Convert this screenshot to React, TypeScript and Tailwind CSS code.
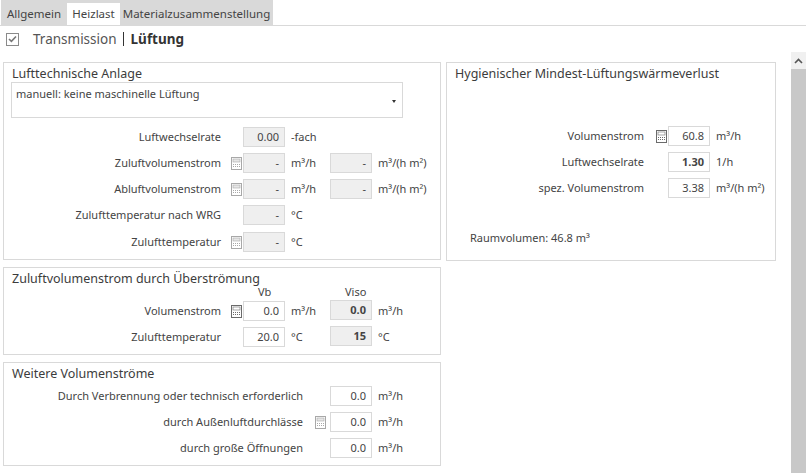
import React from 'react';

// calculator button next to the volume fields
function CalcIcon({ dark = false }: { dark?: boolean }) {
    const c = dark ? '#6b6b6b' : '#a8a8a8';
    return (
        <svg width="11" height="13" viewBox="0 0 11 13" className="block">
            <rect x="0.5" y="0.5" width="10" height="12" fill="#fff" stroke={c} />
            <rect x="2" y="2" width="7" height="3" fill={dark ? '#fff' : '#e6e6e6'} stroke={c} strokeWidth="0.6" />
            {[2, 4, 6, 8].map((x) =>
                [7, 9].map((y) => <rect key={`${x}-${y}`} x={x} y={y} width="1" height="1" fill={c} />)
            )}
        </svg>
    );
}

function Field({ value, disabled = false, bold = false, className = '' }: { value: string; disabled?: boolean; bold?: boolean; className?: string }) {
    return (
        <div
            className={`w-[42px] h-[20px] shrink-0 border border-[#d9d9d9] pr-[5px] text-right leading-[17px] ${disabled ? 'bg-[#efefef]' : 'bg-white'} ${bold ? 'font-bold' : ''} ${className}`}
        >
            {value}
        </div>
    );
}

function Panel({ title, className = '', children }: { title: string; className?: string; children?: React.ReactNode }) {
    return (
        <section className={`border border-[#d9d9d9] bg-white ${className}`}>
            <h3 className="ml-[8px] text-[12.5px] leading-[17px] text-[#3c3c3c]">{title}</h3>
            {children}
        </section>
    );
}

interface RowProps {
    label: string;
    calc?: 'light' | 'dark';
    value: string;
    unit: string;
    value2?: string;
    unit2?: string;
    disabled?: boolean;
    bold?: boolean;
}

// label column, calculator slot, field, unit, optional second field
function Row({ label, calc, value, unit, value2, unit2, disabled, bold }: RowProps) {
    return (
        <div className="flex h-[20px] items-center">
            <div className="w-[217px] shrink-0 text-right">{label}</div>
            <div className="flex w-[22px] shrink-0 justify-end pr-[1px]">{calc && <CalcIcon dark={calc === 'dark'} />}</div>
            <Field value={value} disabled={disabled} bold={bold} />
            <div className="ml-[6px] w-[39px] shrink-0">{unit}</div>
            {value2 && <Field value={value2} disabled={disabled} />}
            {unit2 && <div className="ml-[6px]">{unit2}</div>}
        </div>
    );
}

export default function App() {
    return (
        <div className="h-[473px] w-[806px] overflow-hidden bg-white text-[11px] text-[#444] [font-family:'Noto_Sans',sans-serif]">
            {/* Tabs */}
            <div className="h-[26px] border-b border-[#d9d9d9] pl-[1px]">
                <div className="flex h-[25px] w-[272px] items-end bg-[#d9d9d9] text-[11.5px]">
                    <div className="flex h-[22px] w-[66px] items-center justify-center">Allgemein</div>
                    <div className="flex h-[22px] w-[53px] items-center justify-center bg-white">Heizlast</div>
                    <div className="flex h-[22px] flex-1 items-center justify-center">Materialzusammenstellung</div>
                </div>
            </div>

            {/* Sub navigation */}
            <div className="flex h-[26px] items-center pl-[6px]">
                <div className="flex h-[13px] w-[13px] items-center justify-center border border-[#8a8a8a]">
                    <svg width="9" height="8" viewBox="0 0 9 8"><path d="M1 4l2.4 2.4L8 1.5" fill="none" stroke="#777" strokeWidth="1.6" /></svg>
                </div>
                <span className="ml-[14px] text-[13.5px] text-[#555]">Transmission</span>
                <span className="ml-[6px] h-[14px] w-px bg-[#333]" />
                <span className="ml-[7px] text-[13.5px] font-bold text-[#333]">Lüftung</span>
            </div>

            <div className="flex">
                <div className="mt-[10px] ml-[3px] flex w-[438px] shrink-0 flex-col gap-[7px]">
                    <Panel title="Lufttechnische Anlage" className="h-[198px] pt-[2px]">
                        <div className="relative ml-[7px] mt-[0px] h-[36px] w-[392px] border border-[#d9d9d9] pl-[4px] pt-[3px]">
                            manuell: keine maschinelle Lüftung
                            <span className="absolute right-[6px] top-[17px] h-0 w-0 border-x-[2.5px] border-t-[3px] border-x-transparent border-t-[#333]" />
                        </div>
                        <div className="mt-[9px] flex flex-col gap-[6px]">
                            <Row label="Luftwechselrate" value="0.00" unit="-fach" disabled />
                            <Row label="Zuluftvolumenstrom" calc="light" value="-" unit="m³/h" value2="-" unit2="m³/(h m²)" disabled />
                            <Row label="Abluftvolumenstrom" calc="light" value="-" unit="m³/h" value2="-" unit2="m³/(h m²)" disabled />
                            <Row label="Zulufttemperatur nach WRG" value="-" unit="°C" disabled />
                            <div className="mt-[1px]">
                                <Row label="Zulufttemperatur" calc="light" value="-" unit="°C" disabled />
                            </div>
                        </div>
                    </Panel>

                    <Panel title="Zuluftvolumenstrom durch Überströmung" className="h-[88px] pt-[2px]">
                        <div className="-mt-[2px] flex h-[15px] items-center text-[11px]">
                            <span className="ml-[254px] w-[87px]">Vb</span>
                            <span>Viso</span>
                        </div>
                        <div className="mt-[1px] flex flex-col gap-[6px]">
                            <div className="flex h-[20px] items-center">
                                <div className="w-[217px] shrink-0 text-right">Volumenstrom</div>
                                <div className="flex w-[22px] shrink-0 justify-end pr-[1px]"><CalcIcon dark /></div>
                                <Field value="0.0" />
                                <div className="ml-[6px] w-[39px] shrink-0">m³/h</div>
                                <Field value="0.0" disabled bold className="-mt-[2px]" />
                                <div className="ml-[6px]">m³/h</div>
                            </div>
                            <div className="flex h-[20px] items-center">
                                <div className="w-[217px] shrink-0 text-right">Zulufttemperatur</div>
                                <div className="w-[22px] shrink-0" />
                                <Field value="20.0" />
                                <div className="ml-[6px] w-[39px] shrink-0">°C</div>
                                <Field value="15" disabled bold className="-mt-[2px]" />
                                <div className="ml-[6px]">°C</div>
                            </div>
                        </div>
                    </Panel>

                    <Panel title="Weitere Volumenströme" className="h-[104px] pt-[2px]">
                        <div className="mt-[4px] flex flex-col gap-[6px]">
                            {[
                                { label: 'Durch Verbrennung oder technisch erforderlich' },
                                { label: 'durch Außenluftdurchlässe', calc: true },
                                { label: 'durch große Öffnungen' },
                            ].map((r) => (
                                <div key={r.label} className="flex h-[20px] items-center">
                                    <div className="w-[299px] shrink-0 text-right">{r.label}</div>
                                    <div className="flex w-[27px] shrink-0 justify-end pr-[4px]">{r.calc && <CalcIcon />}</div>
                                    <Field value="0.0" />
                                    <div className="ml-[6px]">m³/h</div>
                                </div>
                            ))}
                        </div>
                    </Panel>
                </div>

                <div className="mt-[10px] ml-[5px] w-[330px] shrink-0">
                    <Panel title="Hygienischer Mindest-Lüftungswärmeverlust" className="h-[199px] pt-[2px]">
                        <div className="mt-[44px] flex flex-col gap-[6px]">
                            {[
                                { label: 'Volumenstrom', value: '60.8', unit: 'm³/h', calc: true },
                                { label: 'Luftwechselrate', value: '1.30', unit: '1/h', bold: true },
                                { label: 'spez. Volumenstrom', value: '3.38', unit: 'm³/(h m²)' },
                            ].map((r) => (
                                <div key={r.label} className="flex h-[20px] items-center">
                                    <div className="w-[197px] shrink-0 text-right">{r.label}</div>
                                    <div className="flex w-[24px] shrink-0 justify-end pr-[1px]">{r.calc && <CalcIcon dark />}</div>
                                    <Field value={r.value} bold={r.bold} />
                                    <div className="ml-[6px]">{r.unit}</div>
                                </div>
                            ))}
                        </div>
                        <div className="ml-[23px] mt-[32px]">Raumvolumen: 46.8 m³</div>
                    </Panel>
                </div>

                {/* Scrollbar */}
                <div className="ml-[15px] flex h-[421px] w-[15px] shrink-0 flex-col">
                    <div className="flex h-[17px] items-center justify-center bg-[#f0f0f0]">
                        <svg width="9" height="6" viewBox="0 0 9 6"><path d="M1 5l3.5-3.5L8 5" fill="none" stroke="#555" strokeWidth="1.6" /></svg>
                    </div>
                    <div className="flex-1 bg-[#c8c8c8]" />
                </div>
            </div>
        </div>
    );
}
